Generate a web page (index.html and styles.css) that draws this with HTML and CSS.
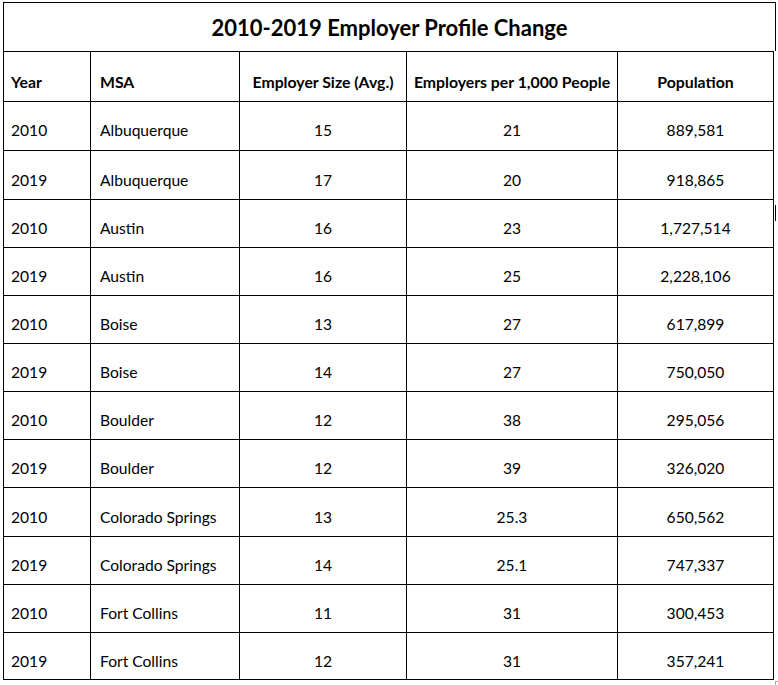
FILE: index.html
```html
<!DOCTYPE html>
<html>
<head>
<meta charset="utf-8">
<link rel="stylesheet" href="styles.css">
</head>
<body>
<div class="page">
  <div class="title">2010-2019 Employer Profile Change</div>
  <table class="grid">
    <colgroup>
      <col class="c-year"><col class="c-msa"><col class="c-size"><col class="c-per"><col class="c-pop">
    </colgroup>
    <thead>
      <tr class="head">
        <th class="left first">Year</th>
        <th class="left">MSA</th>
        <th>Employer Size (Avg.)</th>
        <th>Employers per 1,000 People</th>
        <th>Population</th>
      </tr>
    </thead>
    <tbody>
      <tr class="r1"><td class="left first">2010</td><td class="left">Albuquerque</td><td>15</td><td>21</td><td>889,581</td></tr>
      <tr class="r49"><td class="left first">2019</td><td class="left">Albuquerque</td><td>17</td><td>20</td><td>918,865</td></tr>
      <tr><td class="left first">2010</td><td class="left">Austin</td><td>16</td><td>23</td><td>1,727,514</td></tr>
      <tr><td class="left first">2019</td><td class="left">Austin</td><td>16</td><td>25</td><td>2,228,106</td></tr>
      <tr><td class="left first">2010</td><td class="left">Boise</td><td>13</td><td>27</td><td>617,899</td></tr>
      <tr><td class="left first">2019</td><td class="left">Boise</td><td>14</td><td>27</td><td>750,050</td></tr>
      <tr><td class="left first">2010</td><td class="left">Boulder</td><td>12</td><td>38</td><td>295,056</td></tr>
      <tr><td class="left first">2019</td><td class="left">Boulder</td><td>12</td><td>39</td><td>326,020</td></tr>
      <tr class="r49"><td class="left first">2010</td><td class="left">Colorado Springs</td><td>13</td><td>25.3</td><td>650,562</td></tr>
      <tr><td class="left first">2019</td><td class="left">Colorado Springs</td><td>14</td><td>25.1</td><td>747,337</td></tr>
      <tr><td class="left first">2010</td><td class="left">Fort Collins</td><td>11</td><td>31</td><td>300,453</td></tr>
      <tr class="last"><td class="left first">2019</td><td class="left">Fort Collins</td><td>12</td><td>31</td><td>357,241</td></tr>
    </tbody>
  </table>
  <span class="handle-side"></span>
  <span class="handle-corner"></span>
</div>
</body>
</html>
```
FILE: styles.css
```css
html, body {
  margin: 0;
  padding: 0;
  background: #ffffff;
}
body {
  font-family: Lato, "Open Sans", "Liberation Sans", sans-serif;
  color: #000;
}
.page {
  position: relative;
  padding: 2px 0 0 3px;
  width: 778px;
  height: 685px;
  box-sizing: border-box;
}
.title {
  width: 771px;
  height: 48px;
  border: 1px solid #000;
  border-bottom: none;
  display: flex;
  align-items: center;
  justify-content: center;
  font-weight: bold;
  font-size: 22px;
}
.grid {
  border-collapse: collapse;
  table-layout: fixed;
  width: 771px;
}
.c-year { width: 87px; }
.c-msa { width: 149px; }
.c-size { width: 167px; }
.c-per { width: 211px; }
.c-pop { width: 156px; }
.grid th, .grid td {
  border: 1px solid #000;
  padding: 0 0 10px 0;
  vertical-align: bottom;
  text-align: center;
  font-size: 15.6px;
  line-height: 18px;
  white-space: nowrap;
}
.grid th {
  font-weight: bold;
  font-size: 15.8px;
  padding-bottom: 10px;
}
.grid .left { text-align: left; padding-left: 9px; }
.grid .first { padding-left: 7px; }
.head { height: 50px; }
.grid tbody tr { height: 48px; }
.grid tbody tr.r1 { height: 49px; }
.grid tbody tr.r1 td { padding-bottom: 11px; }
.grid tbody tr.r49 { height: 49px; }
.grid tbody tr.last { height: 47px; }
.grid tbody tr.last td { padding-bottom: 9px; }
.handle-side {
  position: absolute;
  left: 775px;
  top: 205px;
  width: 1px;
  height: 16px;
  background: #000;
}
.handle-corner {
  position: absolute;
  left: 775px;
  top: 681px;
  width: 3px;
  height: 4px;
  border-left: 1px solid #aaa;
  border-top: 1px solid #aaa;
  box-sizing: border-box;
}
```
